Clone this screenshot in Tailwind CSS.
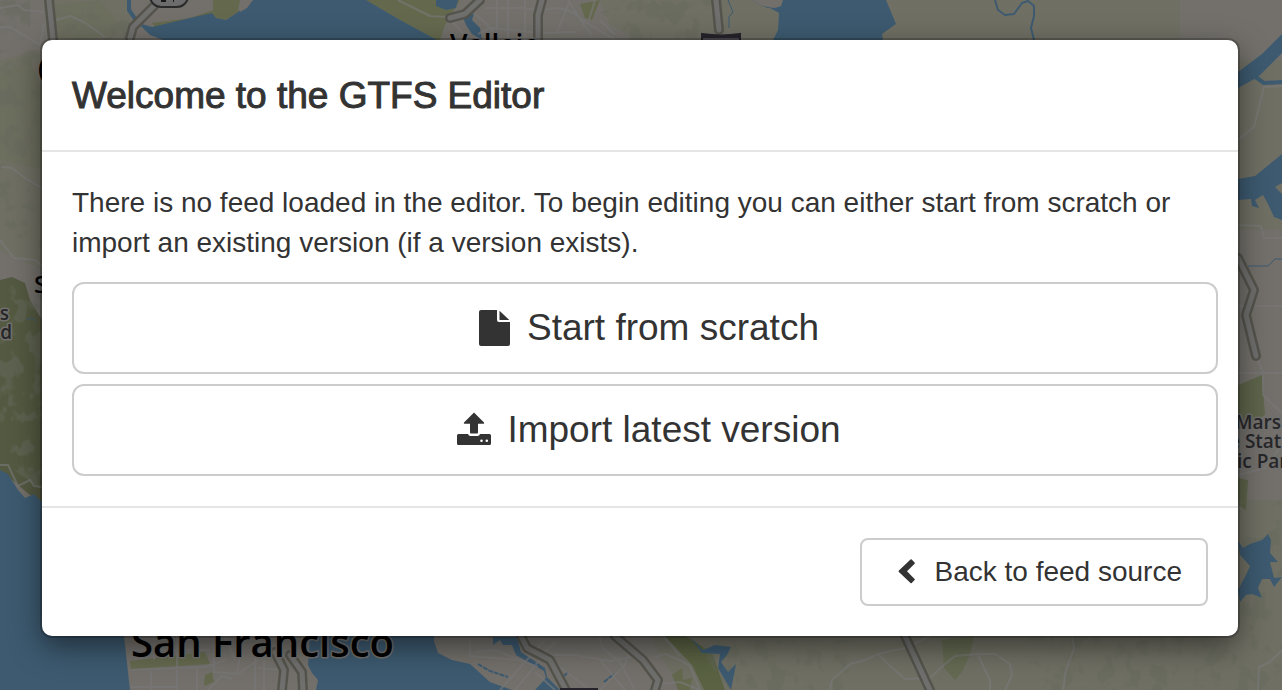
<!DOCTYPE html>
<html lang="en">
  <head>
    <meta charset="UTF-8" />
    <meta name="viewport" content="width=device-width, initial-scale=1.0" />
    <title>GTFS Editor</title>
    <script src="https://cdn.jsdelivr.net/npm/@tailwindcss/browser@4"></script>
  </head>
  <body class="min-h-screen overflow-hidden bg-[#e6e0d2] font-['Helvetica_Neue','Liberation_Sans',Arial,sans-serif] text-[#333]">
    <!-- Map -->
    <svg
      class="fixed inset-0 h-full w-full"
      viewBox="0 0 1282 690"
      preserveAspectRatio="xMidYMid slice"
      aria-hidden="true"
    >
      <defs>
        <filter id="relief" x="0" y="0" width="100%" height="100%">
          <feTurbulence type="fractalNoise" baseFrequency="0.06 0.045" numOctaves="3" seed="8" />
          <feColorMatrix values="0 0 0 0 0.62  0 0 0 0 0.66  0 0 0 0 0.5  9 0 0 0 -4.6" />
          <feComposite in2="SourceGraphic" operator="in" />
        </filter>
      </defs>
      <rect width="1282" height="690" fill="#e6e0d6" />
      <!-- Hills -->
      <g fill="#e0dfc8">
        <path d="M600 0H1180V40H640L610 25zM0 60L42 50V270L0 250zM650 636H1282V690H680zM1238 60H1282V230H1238zM1238 500H1282V690H1238zM50 0H130V40H55z" />
      </g>
      <path fill="#d9dcbd" d="M0 75L30 60 42 90V170L0 160zM55 5L100 0 125 30 90 40 55 38z" />
      <g fill="#c8d39c">
        <path d="M0 280L12 277 25 283 30 300 42 320V505L0 470z" fill="#a8b382" />
        <path d="M365 0H460L445 25 440 40 425 40 400 20zM152 23L190 18 213 10V0H240L238 12 226 20 216 18 213 15 170 25 155 27zM580 4L600 0 592 20 585 18z" />
        <path d="M665 636H685L712 652 725 690H704L692 665z" fill="#b4c587" />
        <path d="M130 661L205 652 210 664 131 669zM205 675L212 672 214 682 204 686z" />
        <path d="M1238 385L1262 375 1265 415 1238 430zM1238 478L1248 480 1246 510 1238 505z" fill="#bccb96" />
        <path d="M942 640L974 636 970 655 962 672 955 680 944 668z" fill="#c9d4a4" />
        <path d="M672 675L682 668 683 680 692 678 690 690H678z" />
      </g>
      <g filter="url(#relief)" opacity="0.5">
        <path d="M600 12L640 0H720V40H630zM0 50L42 50V250L0 230zM0 285H42V490L0 460zM50 5H130V40H65zM690 640H850V690H730zM1020 636H1282V690H1040zM1238 500H1282V640H1238zM0 0H30V40H0z" />
      </g>
      <!-- Water -->
      <g fill="#7ab5e0">
        <path d="M253 0H366L400 20 437 40H163L150 35 138 23 152 27 190 18 212 13 216 18 226 20 238 12z" />
        <path d="M436 0H458L456 8 446 10 436 6zM462 15L475 10 472 20 480 28 482 40 472 34 466 25z" />
        <path d="M752 0H783L779 6 770 8 779 13 778 30 773 40H883L882 34 896 24 886 0H783L780 6 768 8 762 6z" />
        <path d="M0 470L8 474 18 490 25 498 34 494 42 502 124 636 130 690H0z" />
        <path d="M310 636H434V641L438 653 452 660 470 664 490 682 512 690H316L318 680 312 673 308 665z" />
        <path d="M493 637H517L521 652 545 668 547 677 560 690H535L546 678 544 671 516 655 512 645 503 645 500 640 493 645z" />
        <path d="M690 637L703 650 715 645 731 647 727 655 721 662 728 672 736 664 731 690 718 668 720 654 702 653z" />
        <path d="M1238 72L1262 54 1282 34V53L1258 77 1238 88z" />
        <path d="M1238 179L1255 176 1282 154V183L1275 187 1282 194V220L1274 217 1268 204 1263 195 1255 200 1259 208 1252 206 1251 199 1238 200z" />
        <path d="M1238 541L1243 548 1250 544 1262 540 1268 534 1271 540 1270 553 1278 562 1270 562 1274 578 1282 577 1274 587 1270 579 1262 579 1258 588 1262 598 1252 594 1246 595 1240 602 1238 590 1246 575 1250 566 1240 555z" />
      </g>
      <path fill="#e6e0d6" d="M752 0H783L781 6 775 8 762 6zM240 0H253L247 8 240 12z" />
      <g fill="none" stroke="#7ab5e0" stroke-linejoin="round">
        <path d="M129 0V10L140 26" stroke-width="4" />
        <path d="M995 0L998 10 1005 15 1014 14 1022 3 1028 1 1034 6V16L1031 28 1034 40" stroke-width="2" />
        <path d="M728 0L733 12 729 17V28" stroke-width="1" />
        <path d="M1254 76L1264 83 1282 82" stroke-width="4" />
        <path d="M1248 266H1268L1275 259H1282M26 320L32 318 36 321" stroke-width="1" />
        <path d="M478 664L490 671 508 677M604 682L614 674M560 680L568 672" stroke-width="2" stroke-dasharray="5 1" />
      </g>
      <!-- Minor roads -->
      <g fill="none" stroke="#efefef" stroke-width="2" stroke-linejoin="round" stroke-opacity="0.65">
        <path d="M0 8L18 5 24 10 44 12M0 27H10L40 45M44 24L40 45M56 20L70 16 84 22 105 37M398 0L430 16 448 17 460 12" />
        <path d="M1 167L12 168 25 178 42 188M0 240L14 258 35 260 42 266M0 465H8L18 486 30 480 34 486 42 487" />
        <path d="M453 22L465 36M472 12L485 22 495 34V40M485 8H520L540 10 560 8 572 12 590 25 615 40M497 0V40M508 0V40M525 0V40M570 0L562 20 556 34M568 0L584 25 592 35M595 0L589 20M540 33L575 32M478 34L490 28 540 33M600 20L615 35" />
        <path d="M1282 86L1264 87 1254 127 1238 140M1238 225L1261 226 1264 238H1282M1238 306H1282M1238 373H1282M1258 360L1263 372V395L1282 413M1238 475L1265 468 1282 445M1282 650L1270 662 1259 667 1258 690M1249 0" />
        <path d="M130 670L205 667 225 660M131 687H178M177 636V690M151 671V690M197 667V690M214 636V672L238 674 258 660M208 690L222 676 232 679M255 655V690M264 660V690M140 650H210M154 636V660M195 636V655M225 636L235 660M258 668L280 670M240 655L237 674" />
        <path d="M470 640V656L520 660M475 652L495 650 538 667M545 640L500 690M560 640L540 655 575 655 610 661 640 655M600 660L625 690M515 690L530 672 555 640M556 664L590 690M535 672L555 690M600 636L602 648 620 662 635 690M600 690L625 665 630 650M655 657L665 654 680 660 690 666 700 690M660 684L680 682 700 690M663 636L680 656M830 690L832 680 850 664" />
        <path d="M850 664L865 660 878 654 905 648 930 636M878 654L888 664 905 679 930 678 945 664 955 656 978 654 995 654 1010 664 1012 675 1005 690M978 654L984 668 990 680V690M1072 636L1074 648 1066 670 1063 690" />
      </g>
      <!-- Highways -->
      <g fill="none" stroke-linejoin="round" stroke-linecap="round">
        <g stroke="#aaa898" stroke-width="10">
          <path d="M49 0L53 40M154 6L133 27 130 38M480 0L465 14 450 18M542 0L538 15V40M716 0L719 30M521 636L527 648 550 660 566 690M615 636L643 660 658 680 655 690M905 636L930 690M1238 258L1254 290 1246 315 1256 356M275 652L284 670 282 690M290 655L302 672 303 690" />
        </g>
        <g stroke="#dededd" stroke-width="5">
          <path d="M49 0L53 40M154 6L133 27 130 38M480 0L465 14 450 18M542 0L538 15V40M716 0L719 30M521 636L527 648 550 660 566 690M615 636L643 660 658 680 655 690M905 636L930 690M1238 258L1254 290 1246 315 1256 356M275 652L284 670 282 690M290 655L302 672 303 690" />
        </g>
      </g>
      <!-- Route shields -->
      <rect x="150" y="-20" width="38" height="27" rx="11" fill="#d8d8d8" stroke="#555" stroke-width="2" />
      <path d="M161 1H166M173 1H174" stroke="#333" stroke-width="2" />
      <path d="M702 34Q721 37 740 34V60H702z" fill="#b0a9b5" stroke="#4c4656" stroke-width="2" />
      <path d="M701 35H741V38H701zM560 688H598V690H560z" fill="#4c4656" />
      <!-- Place labels -->
      <g
        class="font-['Open_Sans','Noto_Sans',sans-serif]"
        font-weight="600"
        stroke="#e3e0dc"
        stroke-width="3"
        stroke-linejoin="round"
        paint-order="stroke"
      >
        <text x="131" y="657" font-size="40">San Francisco</text>
        <text x="450" y="55" font-size="28">Vallejo</text>
        <text x="34" y="293" font-size="24">San Rafael</text>
        <text x="38" y="77" font-size="26">(</text>
        <g fill="#4f4f52" font-size="19">
          <text x="9" y="320" text-anchor="end">s</text>
          <text x="12" y="339" text-anchor="end">d</text>
          <text x="1235" y="429">Marsh</text>
          <text x="1229" y="448">e State</text>
          <text x="1237" y="468">ic Park</text>
        </g>
      </g>
    </svg>

    <!-- Modal -->
    <div class="fixed inset-0 overflow-y-auto bg-black/50 py-10 pr-11 pl-[42px]">
      <div
        role="dialog"
        aria-modal="true"
        aria-labelledby="modal-title"
        class="rounded-[10px] bg-white shadow-[0_10px_30px_rgba(0,0,0,0.5)] ring-2 ring-black/20"
      >
        <header class="border-b-2 border-[#e5e5e5] px-[30px] pt-[31px] pb-[29px]">
          <h1 id="modal-title" class="text-[37px] leading-[50px] font-normal [-webkit-text-stroke:1px_#333]">
            Welcome to the GTFS Editor
          </h1>
        </header>

        <div class="pt-[31px] pr-5 pb-[30px] pl-[30px]">
          <p class="mb-[19px] text-[28px] leading-10">
            There is no feed loaded in the editor. To begin editing you can either start from scratch or
            import an existing version (if a version exists).
          </p>
          <div class="flex flex-col gap-[10px]">
            <button
              type="button"
              class="flex h-[92px] items-center justify-center gap-4 rounded-xl border-2 border-[#ccc] bg-white pl-2 text-[37px] hover:bg-gray-100"
            >
              <svg class="h-9 w-8" viewBox="0 0 32 36" fill="currentColor" aria-hidden="true">
                <path d="M2 0H18V10Q18 12 20 12H31V34Q31 36 29 36H2Q0 36 0 34V2Q0 0 2 0z" />
                <path d="M20.5 .8L30.3 10H20.5z" />
              </svg>
              Start from scratch
            </button>
            <button
              type="button"
              class="flex h-[92px] items-center justify-center gap-4 rounded-xl border-2 border-[#ccc] bg-white pl-2 text-[37px] hover:bg-gray-100"
            >
              <svg class="h-9 w-[34px]" viewBox="0 0 34 36" fill="currentColor" aria-hidden="true">
                <path d="M17 .5L27 10.500Q27.600 11.800 26.500 11.800H21V20.500Q21 21.500 20 21.500H14Q13 21.500 13 20.500V11.800H7.500Q6.400 11.800 7 10.500z" />
                <path
                  fill-rule="evenodd"
                  d="M1.500 22H11Q11.500 24 13.500 24H20.500Q22.500 24 23 22H32.500Q34 22 34 23.500V31.500Q34 33 32.500 33H1.500Q0 33 0 31.500V23.500Q0 22 1.500 22zM23.200 28.700A1.300 1.300 0 1 0 25.800 28.700A1.300 1.300 0 1 0 23.200 28.700zM28.500 28.700A1.300 1.300 0 1 0 31.100 28.700A1.300 1.300 0 1 0 28.500 28.700z"
                />
              </svg>
              Import latest version
            </button>
          </div>
        </div>

        <footer class="flex justify-end border-t-2 border-[#e5e5e5] p-[30px]">
          <button
            type="button"
            class="flex h-[68px] items-center gap-5 rounded-lg border-2 border-[#ccc] bg-white pr-6 pl-9 text-[28px] hover:bg-gray-100"
          >
            <svg class="h-[26px] w-[17px]" viewBox="0 0 17 26" fill="currentColor" aria-hidden="true">
              <path d="M12.500 .6Q13.100 0 13.700 .6L16.600 3.500Q17.200 4.100 16.600 4.700L9 12.300 16.600 19.900Q17.200 20.500 16.600 21.100L13.700 24Q13.100 24.600 12.500 24L.9 13.100Q.2 12.300 .9 11.500z" />
            </svg>
            Back to feed source
          </button>
        </footer>
      </div>
    </div>
  </body>
</html>
